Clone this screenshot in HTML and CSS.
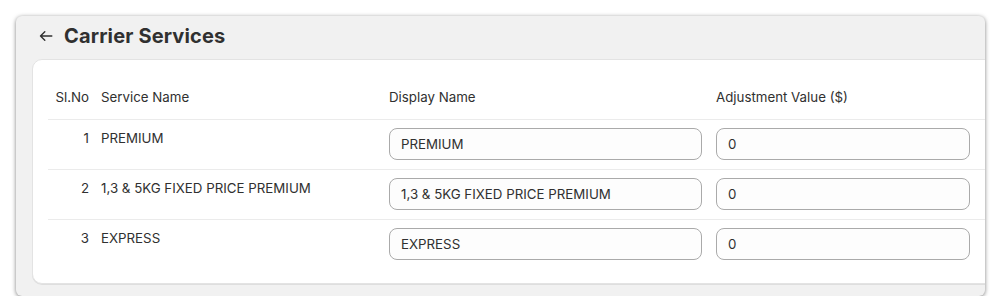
FILE: index.html
```html
<!DOCTYPE html>
<html lang="en">
<head>
  <meta charset="UTF-8">
  <title>Carrier Services</title>
  <link rel="stylesheet" href="styles.css">
</head>
<body>
  <div class="frame">
    <div class="page-header">
      <svg class="back" width="14" height="14" viewBox="0 0 14 14" fill="none" stroke="#303030" stroke-width="1.4" stroke-linecap="round" stroke-linejoin="round">
        <path d="M12.8 7H1.5M5.8 2.8L1.5 7L5.8 11.2"/>
      </svg>
      <h1>Carrier Services</h1>
    </div>

    <div class="card">
      <div class="row head">
        <div class="num">Sl.No</div>
        <div>Service Name</div>
        <div>Display Name</div>
        <div>Adjustment Value ($)</div>
      </div>
      <div class="row">
        <div class="num">1</div>
        <div>PREMIUM</div>
        <div><input type="text" value="PREMIUM"></div>
        <div><input type="text" value="0"></div>
      </div>
      <div class="row">
        <div class="num">2</div>
        <div>1,3 &amp; 5KG FIXED PRICE PREMIUM</div>
        <div><input type="text" value="1,3 &amp; 5KG FIXED PRICE PREMIUM"></div>
        <div><input type="text" value="0"></div>
      </div>
      <div class="row">
        <div class="num">3</div>
        <div>EXPRESS</div>
        <div><input type="text" value="EXPRESS"></div>
        <div><input type="text" value="0"></div>
      </div>
    </div>
  </div>
</body>
</html>
```

FILE: styles.css
```css
body {
  margin: 0;
  background: #fff;
  font-family: Inter, 'Liberation Sans', sans-serif;
  font-size: 13.3px;
  color: #303030;
}
.frame {
  margin: 16px 0 0 16px;
  width: 969px;
  height: 280px;
  box-sizing: border-box;
  background: #f1f1f1;
  border-radius: 6px;
  box-shadow: 0 1px 4px rgba(0,0,0,0.5);
  overflow: hidden;
}
.page-header {
  height: 43px;
  box-sizing: border-box;
  padding: 0 0 3px 23px;
  display: flex;
  align-items: center;
  gap: 11px;
}
.page-header h1 {
  margin: 0;
  font-size: 20px;
  font-weight: 700;
  letter-spacing: 0.15px;
}
.back {
  display: block;
}
.card {
  margin: 0 -20px 0 16px;
  height: 225px;
  box-sizing: border-box;
  padding: 15px 0 0 15px;
  background: #fff;
  border: 1px solid #e3e3e3;
  border-radius: 10px;
  box-shadow: 0 1px 0 rgba(0,0,0,0.08);
}
.row {
  display: grid;
  grid-template-columns: 41px 276px 315px 254px 1fr;
  column-gap: 12px;
  padding: 8px 0 9px;
  line-height: 20px;
  border-top: 1px solid #ebebeb;
}
.row.head {
  border-top: none;
  padding: 12px 0;
}
.num {
  text-align: right;
}
.row input {
  display: block;
  width: 313px;
  height: 32px;
  box-sizing: border-box;
  padding: 0 11px;
  border: 1px solid #aaa;
  border-radius: 8px;
  background: #fdfdfd;
  font-family: inherit;
  font-size: 13.3px;
  color: #303030;
}
.row div:nth-child(4) input {
  width: 254px;
}
```
